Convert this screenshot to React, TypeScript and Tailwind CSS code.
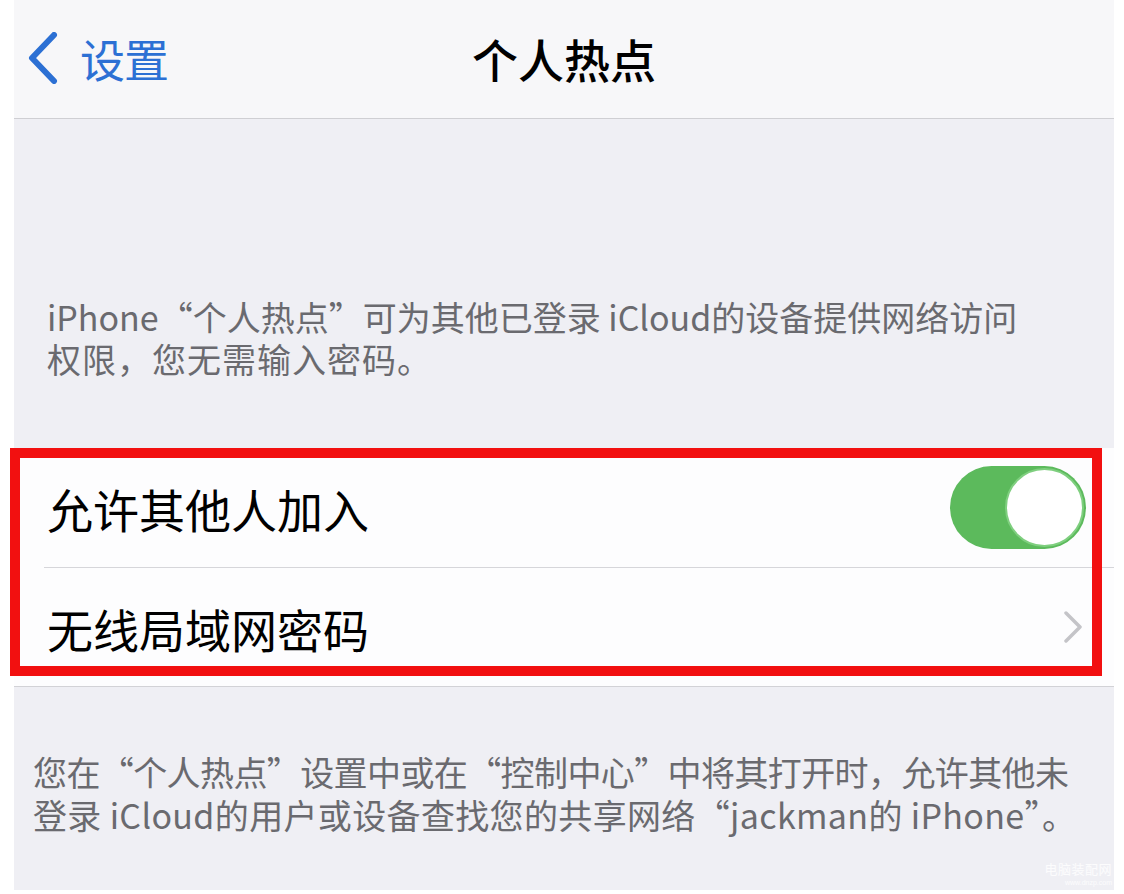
import React from "react";

const FONT = '"Noto Sans CJK SC", "Noto Sans", sans-serif';

export default function App() {
  return (
    <div
      className="relative w-[1124px] h-[894px] bg-white overflow-hidden"
      style={{ fontFamily: FONT }}
    >
      <div className="ml-[14px] w-[1100px] flex flex-col">
        {/* Nav bar */}
        <div className="relative h-[119px] bg-[#f7f7f9] border-b border-[#cfcfd3] flex items-center">
          <div className="flex items-center pl-[13px] pb-[2px]">
            <svg width="32" height="52" viewBox="0 0 32 52" className="mr-[21px]">
              <path
                d="M27 3 L5 26 L27 49"
                fill="none"
                stroke="#2c70d4"
                strokeWidth="6"
                strokeLinecap="round"
                strokeLinejoin="round"
              />
            </svg>
            <span className="text-[45px] leading-none text-[#2c70d4] tracking-[-1px]">设置</span>
          </div>
          <div className="absolute inset-0 flex items-center justify-center pb-[2px]">
            <span className="text-[46px] leading-none font-medium text-black">个人热点</span>
          </div>
        </div>

        {/* Top gray section */}
        <div className="h-[329px] bg-[#efeff4] pl-[33px] pt-[177px]">
          <p className="text-[34px] leading-[42px] text-[#6a6a6f]">
            iPhone“个人热点”可为其他已登录 iCloud的设备提供网络访问
            <br />
            <span className="tracking-[1px]">权限，您无需输入密码。</span>
          </p>
        </div>

        {/* Cells */}
        <div className="bg-[#fdfdfe] border-b border-[#d2d2d6]">
          <div className="h-[119px] flex items-center justify-between pl-[33px] pr-[28px]">
            <span className="text-[46px] leading-none text-black">允许其他人加入</span>
            <div className="relative w-[136px] h-[83px] rounded-full bg-[#5cba5c]">
              <div className="absolute right-[2px] top-[2px] w-[79px] h-[79px] rounded-full bg-white border-[2px] border-[#7fcf7f]" />
            </div>
          </div>
          <div className="ml-[30px] h-px bg-[#d6d6da]" />
          <div className="h-[118px] flex items-center justify-between pl-[33px] pr-[31px]">
            <span className="text-[46px] leading-none text-black pt-[2px]">无线局域网密码</span>
            <svg width="20" height="32" viewBox="0 0 20 32">
              <path
                d="M3 2 L17 16 L3 30"
                fill="none"
                stroke="#c4c4c8"
                strokeWidth="3.5"
                strokeLinecap="round"
                strokeLinejoin="round"
              />
            </svg>
          </div>
        </div>

        {/* Bottom gray section */}
        <div className="relative h-[203px] bg-[#efeff4] pl-[19px] pt-[63px]">
          <p className="text-[34px] leading-[43px] text-[#6a6a6f]">
            <span className="tracking-[-0.6px]">您在“个人热点”设置中或在“控制中心”中将其打开时，允许其他未</span>
            <br />
            <span className="tracking-[0.35px]">登录 iCloud的用户或设备查找您的共享网络“jackman的 iPhone”。</span>
          </p>
          <div className="absolute right-[2px] bottom-[4px] flex flex-col items-end text-white/80">
            <span className="text-[13px] leading-none tracking-[0.5px]">电脑装配网</span>
            <span className="text-[7px] leading-none mt-[4px]" style={{ fontFamily: '"Liberation Sans", sans-serif' }}>
              www.dnzp.com
            </span>
          </div>
        </div>
      </div>

      {/* Red annotation box */}
      <div className="absolute left-[10px] top-[448px] w-[1092px] h-[228px] border-[10px] border-[#f21010]" />
    </div>
  );
}
